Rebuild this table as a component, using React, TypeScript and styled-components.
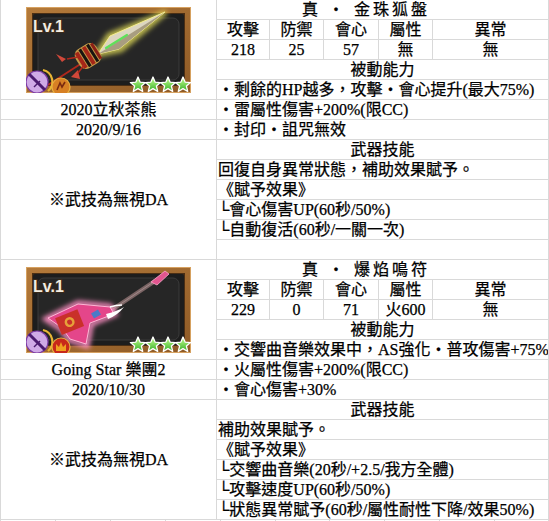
import React from 'react';
import styled, { createGlobalStyle } from 'styled-components';

const GlobalStyle = createGlobalStyle`
  html, body { margin: 0; padding: 0; background: #ffffff; }
  body {
    font-family: "Liberation Serif", "Noto Sans CJK TC", serif;
    color: #000;
    overflow: hidden;
  }
`;

const BORDER = '#d9d9d9';

const Page = styled.div`
  width: 549px;
`;

const Table = styled.table`
  border-collapse: collapse;
  table-layout: fixed;
  width: 549px;
`;

const Cell = styled.td<{ $align?: 'left' | 'center'; $first?: boolean; $title?: boolean }>`
  border: 1px solid ${BORDER};
  ${(p) => (p.$first ? 'border-top: none;' : '')}
  padding: 0 1px;
  height: 19px;
  line-height: 19px;
  font-size: 16px;
  -webkit-text-stroke: 0.25px #000;
  white-space: nowrap;
  overflow: hidden;
  text-align: ${(p) => p.$align ?? 'center'};
  vertical-align: middle;
  ${(p) => (p.$title ? 'letter-spacing: 3px; padding-right: 34px;' : '')}
`;

const ThumbCell = styled(Cell)`
  padding: 0;
  line-height: 0;
`;

const Strip = styled.div`
  display: grid;
  grid-template-columns: repeat(10, 1fr);
  width: 549px;
  height: 20px;
`;

const StripCell = styled.div`
  border-left: 1px solid ${BORDER};
  &:last-child { border-right: 1px solid ${BORDER}; }
`;

const starPath = (cx: number, cy: number, ro: number, ri: number) => {
  const pts: string[] = [];
  for (let i = 0; i < 10; i++) {
    const r = i % 2 === 0 ? ro : ri;
    const a = -Math.PI / 2 + (i * Math.PI) / 5;
    pts.push(`${(cx + r * Math.cos(a)).toFixed(2)},${(cy + r * Math.sin(a)).toFixed(2)}`);
  }
  return `M${pts.join('L')}Z`;
};

const Spear = () => (
  <g>
    <g filter="url(#glowS)">
      <path d="M70 48 L95 43 L140 5 L83 28 Z" fill="#e8e060" stroke="#eae45a" strokeWidth="5" opacity="0.75" />
    </g>
    <path d="M72 47 L93 42 L139 5 L84 29 Z" fill="#dcd6c0" stroke="#f6ef90" strokeWidth="1" />
    <path d="M72 47 L93 42 L139 5 Z" fill="#a89d80" />
    <path d="M80 41 L101 28" stroke="#5fe05a" strokeWidth="2.2" strokeLinecap="round" />
    <line x1="56" y1="56" x2="22" y2="78" stroke="#b0281c" strokeWidth="2" />
    <g transform="rotate(-32 62 49)">
      <rect x="50" y="38" width="24" height="22" rx="7" fill="#c49a48" />
      <rect x="52" y="40" width="4" height="18" fill="#a42618" />
      <rect x="57" y="39" width="3" height="20" fill="#1a1410" />
      <rect x="61" y="39" width="4" height="20" fill="#a42618" />
      <rect x="66" y="39" width="3" height="20" fill="#1a1410" />
      <rect x="70" y="40" width="3" height="18" fill="#8a2016" />
    </g>
    <path d="M30 47 L40 52 L36 55 Z" fill="#d0483a" />
    <path d="M45 70 L52 63 L54 72 Z" fill="#d0483a" />
    <line x1="41" y1="52" x2="52" y2="50" stroke="#b0281c" strokeWidth="1.5" />
    <line x1="52" y1="66" x2="58" y2="58" stroke="#b0281c" strokeWidth="1.5" />
  </g>
);

const Guitar = () => (
  <g>
    <line x1="78" y1="48" x2="129" y2="14" stroke="#7b6464" strokeWidth="4" />
    <line x1="78" y1="48" x2="129" y2="14" stroke="#a08a8a" strokeWidth="1" />
    <path d="M125 15 L139 4 L143 7 L131 18 Z" fill="#e2558f" stroke="#f7a9c8" strokeWidth="0.8" />
    <g filter="url(#glowG)">
      <path d="M20 52 L52 36 L84 39 L89 47 L65 57 L61 79 L43 73 L35 62 Z" fill="none" stroke="#ff8fc4" strokeWidth="5" />
    </g>
    <path d="M22 51 L52 37 L84 40 L88 47 L64 56 L60 77 L44 72 L36 61 Z" fill="#e4468a" stroke="#ffb6d6" strokeWidth="1" />
    <g transform="rotate(-22 44 56)">
      <rect x="32" y="46" width="24" height="18" fill="#c9302a" />
      <circle cx="44" cy="55" r="5" fill="#e6a13a" />
      <circle cx="44" cy="55" r="2.5" fill="#c9302a" />
    </g>
    <rect x="66" y="44" width="8" height="6" fill="#4a7ac8" transform="rotate(-30 70 47)" />
    <path d="M80 47 Q92 44 98 40 Q92 48 82 52 Z" fill="#ffffff" />
    <path d="M84 40 Q90 38 96 38" stroke="#ffffff" strokeWidth="1.5" fill="none" />
  </g>
);

const Thumb = ({ kind }: { kind: 'spear' | 'guitar' }) => {
  const gid = `star-${kind}`;
  return (
    <svg width="165" height="86" viewBox="0 0 165 86" style={{ display: 'inline-block', verticalAlign: 'middle' }}>
      <defs>
        <linearGradient id={gid} x1="0" y1="0" x2="0" y2="1">
          <stop offset="0" stopColor="#c8ff90" />
          <stop offset="1" stopColor="#35b02a" />
        </linearGradient>
        <linearGradient id={`wood-${kind}`} x1="0" y1="0" x2="1" y2="1">
          <stop offset="0" stopColor="#b47a3a" />
          <stop offset="1" stopColor="#8e5a26" />
        </linearGradient>
        <filter id="glowS" x="-30%" y="-30%" width="160%" height="160%">
          <feGaussianBlur stdDeviation="2.5" />
        </filter>
        <filter id="glowG" x="-30%" y="-30%" width="160%" height="160%">
          <feGaussianBlur stdDeviation="2.5" />
        </filter>
      </defs>
      <rect x="0" y="0" width="165" height="86" fill={`url(#wood-${kind})`} />
      <rect x="0.5" y="0.5" width="164" height="85" fill="none" stroke="#d6a160" strokeWidth="1" />
      <rect x="6" y="6" width="153" height="73" fill="#4a2e14" />
      <rect x="7" y="7" width="151" height="71" rx="2" fill="#1d1d1d" />
      <rect x="12" y="11" width="141" height="62" rx="6" fill="#262626" stroke="#3b3b3b" strokeWidth="1" />
      {kind === 'spear' ? <Spear /> : <Guitar />}
      <text
        x="7"
        y="25"
        fontFamily="'Liberation Sans', Arial, sans-serif"
        fontWeight="bold"
        fontSize="16"
        fill="#f2ede2"
        stroke="#3a2a1a"
        strokeWidth="2"
        paintOrder="stroke"
      >
        Lv.1
      </text>
      {[112, 127, 142, 157].map((cx) => (
        <path key={cx} d={starPath(cx, 78, 8, 3.6)} fill={`url(#${gid})`} stroke="#ffffff" strokeWidth="1.3" strokeLinejoin="round" />
      ))}
      <path d="M17 63 A12 12 0 0 1 22 84" stroke="#e7b534" strokeWidth="2.2" fill="none" />
      <circle cx="11" cy="75" r="11" fill="#cfaae6" stroke="#7d3ca6" strokeWidth="1.2" />
      <line x1="3" y1="67" x2="19" y2="83" stroke="#4a1a6e" strokeWidth="3" />
      <line x1="8" y1="80" x2="14" y2="74" stroke="#4a1a6e" strokeWidth="1.5" />
      <circle cx="35" cy="80" r="9" fill={kind === 'spear' ? '#d78024' : '#c8281a'} stroke="#e8b040" strokeWidth="1.2" />
      {kind === 'spear' ? (
        <path d="M31 83 L34 76 L36 80 L39 75" stroke="#7a2a10" strokeWidth="1.6" fill="none" />
      ) : (
        <path d="M30 84 L30 77 L33 80 L35 75 L37 80 L40 77 L40 84 Z" fill="#f0a020" />
      )}
    </svg>
  );
};

type Weapon = {
  kind: 'spear' | 'guitar';
  title: string;
  stats: string[];
  passives: string[];
  name: string;
  date: string;
  note: string;
  skills: string[];
};

const weapons: Weapon[] = [
  {
    kind: 'spear',
    title: '真 ・ 金珠狐盤',
    stats: ['218', '25', '57', '無', '無'],
    passives: ['・剩餘的HP越多，攻擊・會心提升(最大75%)', '・雷屬性傷害+200%(限CC)', '・封印・詛咒無效'],
    name: '2020立秋茶熊',
    date: '2020/9/16',
    note: '※武技為無視DA',
    skills: ['回復自身異常狀態，補助效果賦予。', '《賦予效果》', '└會心傷害UP(60秒/50%)', '└自動復活(60秒/一關一次)', ''],
  },
  {
    kind: 'guitar',
    title: '真 ・ 爆焰鳴符',
    stats: ['229', '0', '71', '火600', '無'],
    passives: ['・交響曲音樂效果中，AS強化・普攻傷害+75%', '・火屬性傷害+200%(限CC)', '・會心傷害+30%'],
    name: 'Going Star 樂團2',
    date: '2020/10/30',
    note: '※武技為無視DA',
    skills: ['補助效果賦予。', '《賦予效果》', '└交響曲音樂(20秒/+2.5/我方全體)', '└攻擊速度UP(60秒/50%)', '└狀態異常賦予(60秒/屬性耐性下降/效果50%)'],
  },
];

const headers = ['攻擊', '防禦', '會心', '屬性', '異常'];
const colWidths = [54, 54, 54, 54, 53, 54, 55, 54, 58, 58];

const WeaponRows = ({ w, first }: { w: Weapon; first: boolean }) => (
  <>
    <tr>
      <ThumbCell colSpan={4} rowSpan={5} $first={first}>
        <Thumb kind={w.kind} />
      </ThumbCell>
      <Cell colSpan={6} $first={first} $title>
        {w.title}
      </Cell>
    </tr>
    <tr>
      {headers.map((h, i) => (
        <Cell key={h} colSpan={i === 4 ? 2 : 1}>
          {h}
        </Cell>
      ))}
    </tr>
    <tr>
      {w.stats.map((s, i) => (
        <Cell key={i} colSpan={i === 4 ? 2 : 1}>
          {s}
        </Cell>
      ))}
    </tr>
    <tr>
      <Cell colSpan={6}>被動能力</Cell>
    </tr>
    <tr>
      <Cell colSpan={6} $align="left">
        {w.passives[0]}
      </Cell>
    </tr>
    <tr>
      <Cell colSpan={4}>{w.name}</Cell>
      <Cell colSpan={6} $align="left">
        {w.passives[1]}
      </Cell>
    </tr>
    <tr>
      <Cell colSpan={4}>{w.date}</Cell>
      <Cell colSpan={6} $align="left">
        {w.passives[2]}
      </Cell>
    </tr>
    <tr>
      <Cell colSpan={4} rowSpan={6}>
        {w.note}
      </Cell>
      <Cell colSpan={6}>武器技能</Cell>
    </tr>
    {w.skills.map((s, i) => (
      <tr key={i}>
        <Cell colSpan={6} $align="left">
          {s}
        </Cell>
      </tr>
    ))}
  </>
);

export default function App() {
  return (
    <Page>
      <GlobalStyle />
      <Table>
        <colgroup>
          {colWidths.map((cw, i) => (
            <col key={i} style={{ width: cw }} />
          ))}
        </colgroup>
        <tbody>
          {weapons.map((w, i) => (
            <WeaponRows key={w.title} w={w} first={i === 0} />
          ))}
        </tbody>
      </Table>
      <Strip>
        {Array.from({ length: 10 }).map((_, i) => (
          <StripCell key={i} />
        ))}
      </Strip>
    </Page>
  );
}
